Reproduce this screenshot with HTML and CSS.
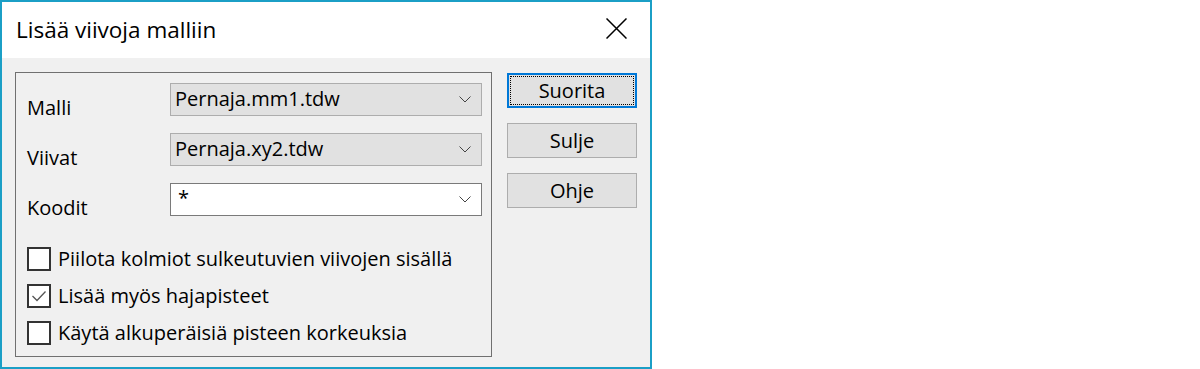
FILE: index.html
```
<!DOCTYPE html>
<html lang="fi">
<head>
<meta charset="utf-8">
<title>Lisää viivoja malliin</title>
<link rel="stylesheet" href="styles.css">
</head>
<body>
<div class="window">
  <div class="titlebar">
    <span class="title">Lisää viivoja malliin</span>
    <svg class="close" width="21" height="21" viewBox="0 0 21 21"><path d="M0.5 0.5 L20.5 20.5 M20.5 0.5 L0.5 20.5" stroke="#000" stroke-width="1.5" fill="none"/></svg>
  </div>
  <div class="content">
    <div class="group">
      <div class="form">
        <span class="label">Malli</span>
        <div class="combo">
          <span class="value">Pernaja.mm1.tdw</span>
          <svg class="chev" width="12" height="7" viewBox="0 0 12 7"><polyline points="0.5,0.5 6,6 11.5,0.5" stroke="#444" stroke-width="1" fill="none"/></svg>
        </div>
        <span class="label">Viivat</span>
        <div class="combo">
          <span class="value">Pernaja.xy2.tdw</span>
          <svg class="chev" width="12" height="7" viewBox="0 0 12 7"><polyline points="0.5,0.5 6,6 11.5,0.5" stroke="#444" stroke-width="1" fill="none"/></svg>
        </div>
        <span class="label">Koodit</span>
        <div class="combo edit">
          <span class="value">*</span>
          <svg class="chev" width="12" height="7" viewBox="0 0 12 7"><polyline points="0.5,0.5 6,6 11.5,0.5" stroke="#444" stroke-width="1" fill="none"/></svg>
        </div>
      </div>
      <div class="checks">
        <div class="check"><span class="box"></span><span>Piilota kolmiot sulkeutuvien viivojen sisällä</span></div>
        <div class="check"><span class="box"><svg width="20" height="20" viewBox="0 0 20 20"><polyline points="3.5,10 8,14.5 16.5,5.5" stroke="#555" stroke-width="1.3" fill="none"/></svg></span><span>Lisää myös hajapisteet</span></div>
        <div class="check"><span class="box"></span><span>Käytä alkuperäisiä pisteen korkeuksia</span></div>
      </div>
    </div>
    <div class="buttons">
      <div class="btn default"><span class="focus">Suorita</span></div>
      <div class="btn">Sulje</div>
      <div class="btn">Ohje</div>
    </div>
  </div>
</div>
</body>
</html>
```
FILE: styles.css
```
* { box-sizing: border-box; }
html, body { margin: 0; padding: 0; background: #fff; }
body {
  font-family: "Open Sans", "Noto Sans", "Liberation Sans", sans-serif;
  font-size: 20px;
  color: #000;
}
.window {
  width: 652px;
  height: 369px;
  border: 2px solid #1b9fc6;
  background: #f0f0f0;
  display: flex;
  flex-direction: column;
}
.titlebar {
  height: 56px;
  background: #fff;
  display: flex;
  align-items: center;
  justify-content: space-between;
  padding: 0 23px 0 14px;
}
.title {
  font-size: 22.5px;
  margin-top: -1px;
}
.close { display: block; margin-top: -3px; }
.content {
  display: flex;
  align-items: flex-start;
  padding: 14px 0 0 13px;
}
.group {
  width: 477px;
  height: 285px;
  border: 1px solid #707070;
  padding: 10px 9px 0 11px;
}
.form {
  display: grid;
  grid-template-columns: 143px 312px;
  grid-auto-rows: 33px;
  row-gap: 17px;
}
.label {
  line-height: 24px;
  padding-top: 13px;
}
.combo {
  display: flex;
  align-items: center;
  justify-content: space-between;
  border: 1px solid #adadad;
  background: #e1e1e1;
  padding: 0 10px 0 4px;
}
.combo .value { line-height: 24px; margin-top: -2px; }
.combo.edit {
  background: #fff;
  border-color: #7a7a7a;
  padding-left: 7px;
}
.combo.edit .value { margin-top: -4px; }
.chev { display: block; }
.checks {
  display: flex;
  flex-direction: column;
  gap: 12px;
  margin-top: 30px;
}
.check {
  display: flex;
  align-items: center;
  height: 25px;
}
.box {
  width: 24px;
  height: 24px;
  border: 2px solid #333;
  background: #fff;
  margin-right: 7px;
  display: flex;
  align-items: center;
  justify-content: center;
}
.box svg { display: block; }
.buttons {
  display: flex;
  flex-direction: column;
  gap: 15px;
  margin-left: 15px;
  margin-top: 1px;
}
.btn {
  width: 130px;
  height: 35px;
  border: 1px solid #adadad;
  background: #e1e1e1;
  display: flex;
  align-items: center;
  justify-content: center;
  line-height: 24px;
}
.btn.default {
  border: 2px solid #0078d7;
  padding: 1px;
}
.btn.default .focus {
  flex: 1;
  align-self: stretch;
  border: 1px dotted #000;
  display: flex;
  align-items: center;
  justify-content: center;
}
```
